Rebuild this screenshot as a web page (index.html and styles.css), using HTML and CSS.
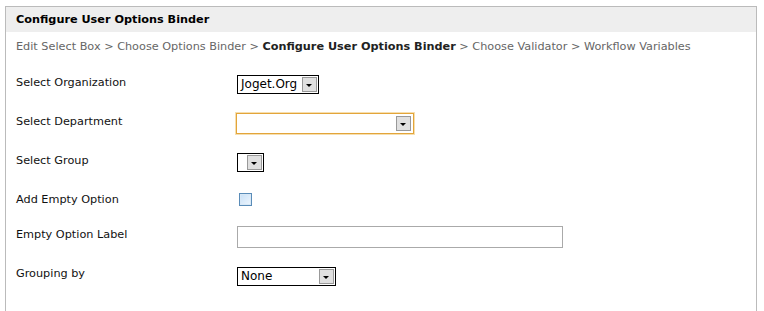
FILE: index.html
```html
<!DOCTYPE html>
<html>
<head>
  <title>Configure User Options Binder</title>
  <meta charset="UTF-8">
  <link rel="stylesheet" href="styles.css">
</head>
<body>
  <div class="panel">
    <div class="panel-title">Configure User Options Binder</div>
    <div class="steps">
      Edit Select Box &gt; Choose Options Binder &gt; <b>Configure User Options Binder</b> &gt; Choose Validator &gt; Workflow Variables
    </div>

    <div class="form">
      <div class="row">
        <label>Select Organization</label>
        <div class="select org m2"><span class="value">Joget.Org</span><span class="arrow"></span></div>
      </div>
      <div class="row">
        <label>Select Department</label>
        <div class="select dept focus m1"><span class="value"></span><span class="arrow"></span></div>
      </div>
      <div class="row">
        <label>Select Group</label>
        <div class="select group m2"><span class="value"></span><span class="arrow"></span></div>
      </div>
      <div class="row short">
        <label>Add Empty Option</label>
        <div class="checkbox m3"></div>
      </div>
      <div class="row">
        <label>Empty Option Label</label>
        <div class="textbox m1"></div>
      </div>
      <div class="row">
        <label>Grouping by</label>
        <div class="select grouping m3"><span class="value">None</span><span class="arrow"></span></div>
      </div>
    </div>
  </div>
</body>
</html>
```

FILE: styles.css
```css
body {
  margin: 0;
  font-family: "DejaVu Sans", Verdana, sans-serif;
  font-size: 11.25px;
  color: #111;
  background: #fff;
}
.panel {
  margin: 6px 0 0 5px;
  width: 750px;
  height: 305px;
  border: 1px solid #bbb;
  border-bottom: none;
  box-sizing: content-box;
}
.panel-title {
  background: #eee;
  height: 25px;
  line-height: 26px;
  padding-left: 10px;
  font-weight: bold;
  color: #000;
}
.steps {
  padding: 7px 0 0 10px;
  line-height: 16px;
  color: #666;
}
.steps b {
  color: #222;
}
.form {
  padding: 20px 0 0 10px;
}
.row {
  display: flex;
  align-items: flex-start;
  height: 39px;
}
.row.short {
  height: 35px;
}
.row label {
  width: 221px;
  line-height: 16px;
}
.m1 { margin-top: -1px; }
.m2 { margin-top: 0; }
.m3 { margin-top: 1px; }
.select {
  display: flex;
  box-sizing: border-box;
  height: 19px;
  border: 1px solid #000;
  background: #fff;
  color: #000;
}
.select .value {
  flex: 1;
  padding-left: 3px;
  line-height: 17px;
  font-size: 12px;
}
.select .arrow {
  width: 15px;
  margin: 1px;
  background: #e0e0e0;
  border: 1px solid #999;
  box-sizing: border-box;
  position: relative;
}
.select .arrow::after {
  content: "";
  position: absolute;
  left: 3px;
  top: 6px;
  border-left: 3px solid transparent;
  border-right: 3px solid transparent;
  border-top: 3px solid #000;
}
.org { width: 82px; }
.dept {
  width: 178px;
  height: 21px;
  margin-left: -1px;
  border: 1px solid #e3a53a;
  box-shadow: 0 0 0 1px #f6dfb0;
}
.dept .arrow { margin: 2px; }
.group { width: 27px; }
.grouping { width: 99px; }
.checkbox {
  margin-left: 2px;
  width: 13px;
  height: 13px;
  box-sizing: border-box;
  border: 1px solid #5a8cb8;
  background: linear-gradient(135deg, #c8e0f6, #eef6fe);
  box-shadow: inset 0 0 0 1px #d8e8f6;
}
.textbox {
  width: 326px;
  height: 22px;
  box-sizing: border-box;
  border: 1px solid #aaa;
  background: #fff;
}
```
